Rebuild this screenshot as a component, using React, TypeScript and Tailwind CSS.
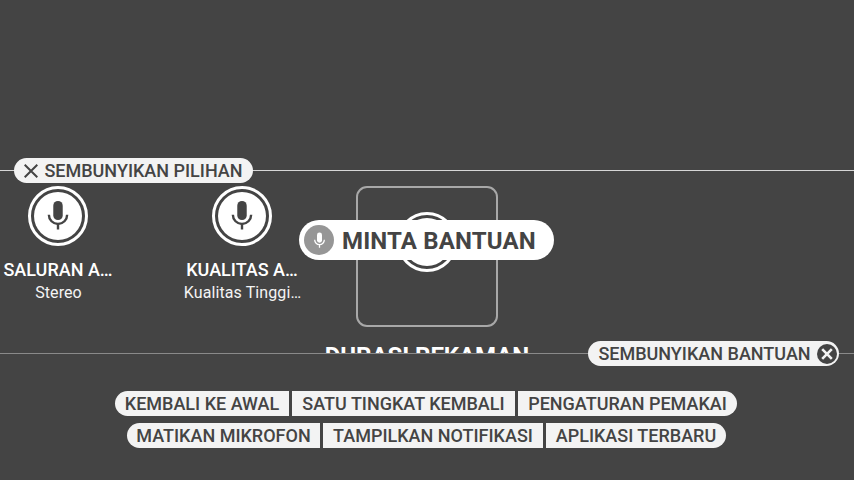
import type { ReactNode } from "react";

function Mic({ className }: { className: string }) {
  return (
    <svg viewBox="0 0 24 24" className={className}>
      <rect x="8.85" y="2" width="6.3" height="12.7" rx="3.1" fill="currentColor" />
      <path d="M5.9 11.2a6.1 6.1 0 0 0 12.2 0M12 17.3V21" fill="none" stroke="currentColor" strokeWidth="1.6" />
    </svg>
  );
}

function MicBadge() {
  return (
    <div className="flex size-[60px] shrink-0 items-center justify-center rounded-full border-[3px] border-white">
      <div className="flex size-12 shrink-0 items-center justify-center rounded-full bg-white text-[#444]">
        <Mic className="size-9" />
      </div>
    </div>
  );
}

function Option({ title, value }: { title: string; value: string }) {
  return (
    <div className="flex w-[184px] shrink-0 flex-col items-center whitespace-nowrap pt-[15px]">
      <MicBadge />
      <div className="mt-[13px] text-lg leading-[22px] font-medium text-white">{title}</div>
      <div className="mt-px pl-px text-base leading-[22px] tracking-[0.1px] text-[#f4f4f4]">{value}</div>
    </div>
  );
}

function Chip({ children, className = "" }: { children: ReactNode; className?: string }) {
  return (
    <button
      className={`flex h-[25px] items-center justify-center whitespace-nowrap bg-[#f3f3f3] text-lg leading-[25px] font-medium text-[#444] ${className}`}
    >
      {children}
    </button>
  );
}

export default function App() {
  return (
    <div className="flex h-[480px] w-[854px] flex-col overflow-hidden bg-[#444] font-['Roboto','Noto_Sans',sans-serif]">
      <div className="h-[170px] shrink-0" />

      <div className="relative h-px shrink-0 bg-[#d6d6d6]">
        <Chip className="absolute top-[-12px] left-[14px] w-[239px] gap-[6px] rounded-full">
          <svg viewBox="0 0 14 14" className="size-[14px]" stroke="currentColor" strokeWidth="2" fill="none">
            <path d="M.7.7l12.6 12.6M13.3.7L.7 13.3" />
          </svg>
          <span>SEMBUNYIKAN PILIHAN</span>
        </Chip>
      </div>

      <div className="relative h-[182px] shrink-0">
        <div className="h-full overflow-hidden">
          <div className="ml-[-34px] flex">
            <Option title="SALURAN A…" value="Stereo" />
            <Option title="KUALITAS A…" value="Kualitas Tinggi…" />
            <div className="flex w-[186px] shrink-0 flex-col items-center pt-[15px]">
              <div className="flex h-[141px] w-[142px] shrink-0 justify-center rounded-[11px] border-2 border-[#a8a8a8] pt-[24px]">
                <MicBadge />
              </div>
              <div className="mt-[14px] text-2xl leading-[30px] font-bold tracking-[-0.05px] whitespace-nowrap text-white">
                DURASI REKAMAN
              </div>
            </div>
          </div>
        </div>
        <button className="absolute top-[49px] left-[299px] flex h-10 w-[255px] items-center rounded-full bg-white pl-[5px] text-2xl font-bold tracking-[0.15px] whitespace-nowrap text-[#444]">
          <span className="mr-2 flex size-[30px] items-center justify-center rounded-full bg-[#969696] text-white">
            <Mic className="size-[19px]" />
          </span>
          <span className="pt-px">MINTA BANTUAN</span>
        </button>
      </div>

      <div className="relative h-px shrink-0 bg-[#8a8a8a]">
        <Chip className="absolute top-[-12px] left-[588px] w-[251px] gap-[6px] rounded-full pl-2">
          <span>SEMBUNYIKAN BANTUAN</span>
          <svg viewBox="0 0 20 20" className="size-5">
            <circle cx="10" cy="10" r="10" fill="#444" />
            <path d="M5.2 5.2l9.6 9.6M14.8 5.2l-9.6 9.6" stroke="#f3f3f3" strokeWidth="2.6" />
          </svg>
        </Chip>
      </div>

      <div className="flex flex-col gap-[7px] pt-[37px]">
        <div className="flex gap-[3px] pl-[115px]">
          <Chip className="w-[174px] rounded-l-full">KEMBALI KE AWAL</Chip>
          <Chip className="w-[223px]">SATU TINGKAT KEMBALI</Chip>
          <Chip className="w-[219px] rounded-r-full">PENGATURAN PEMAKAI</Chip>
        </div>
        <div className="flex gap-[3px] pl-[127px]">
          <Chip className="w-[193px] rounded-l-full">MATIKAN MIKROFON</Chip>
          <Chip className="w-[220px]">TAMPILKAN NOTIFIKASI</Chip>
          <Chip className="w-[180px] rounded-r-full">APLIKASI TERBARU</Chip>
        </div>
      </div>
    </div>
  );
}
